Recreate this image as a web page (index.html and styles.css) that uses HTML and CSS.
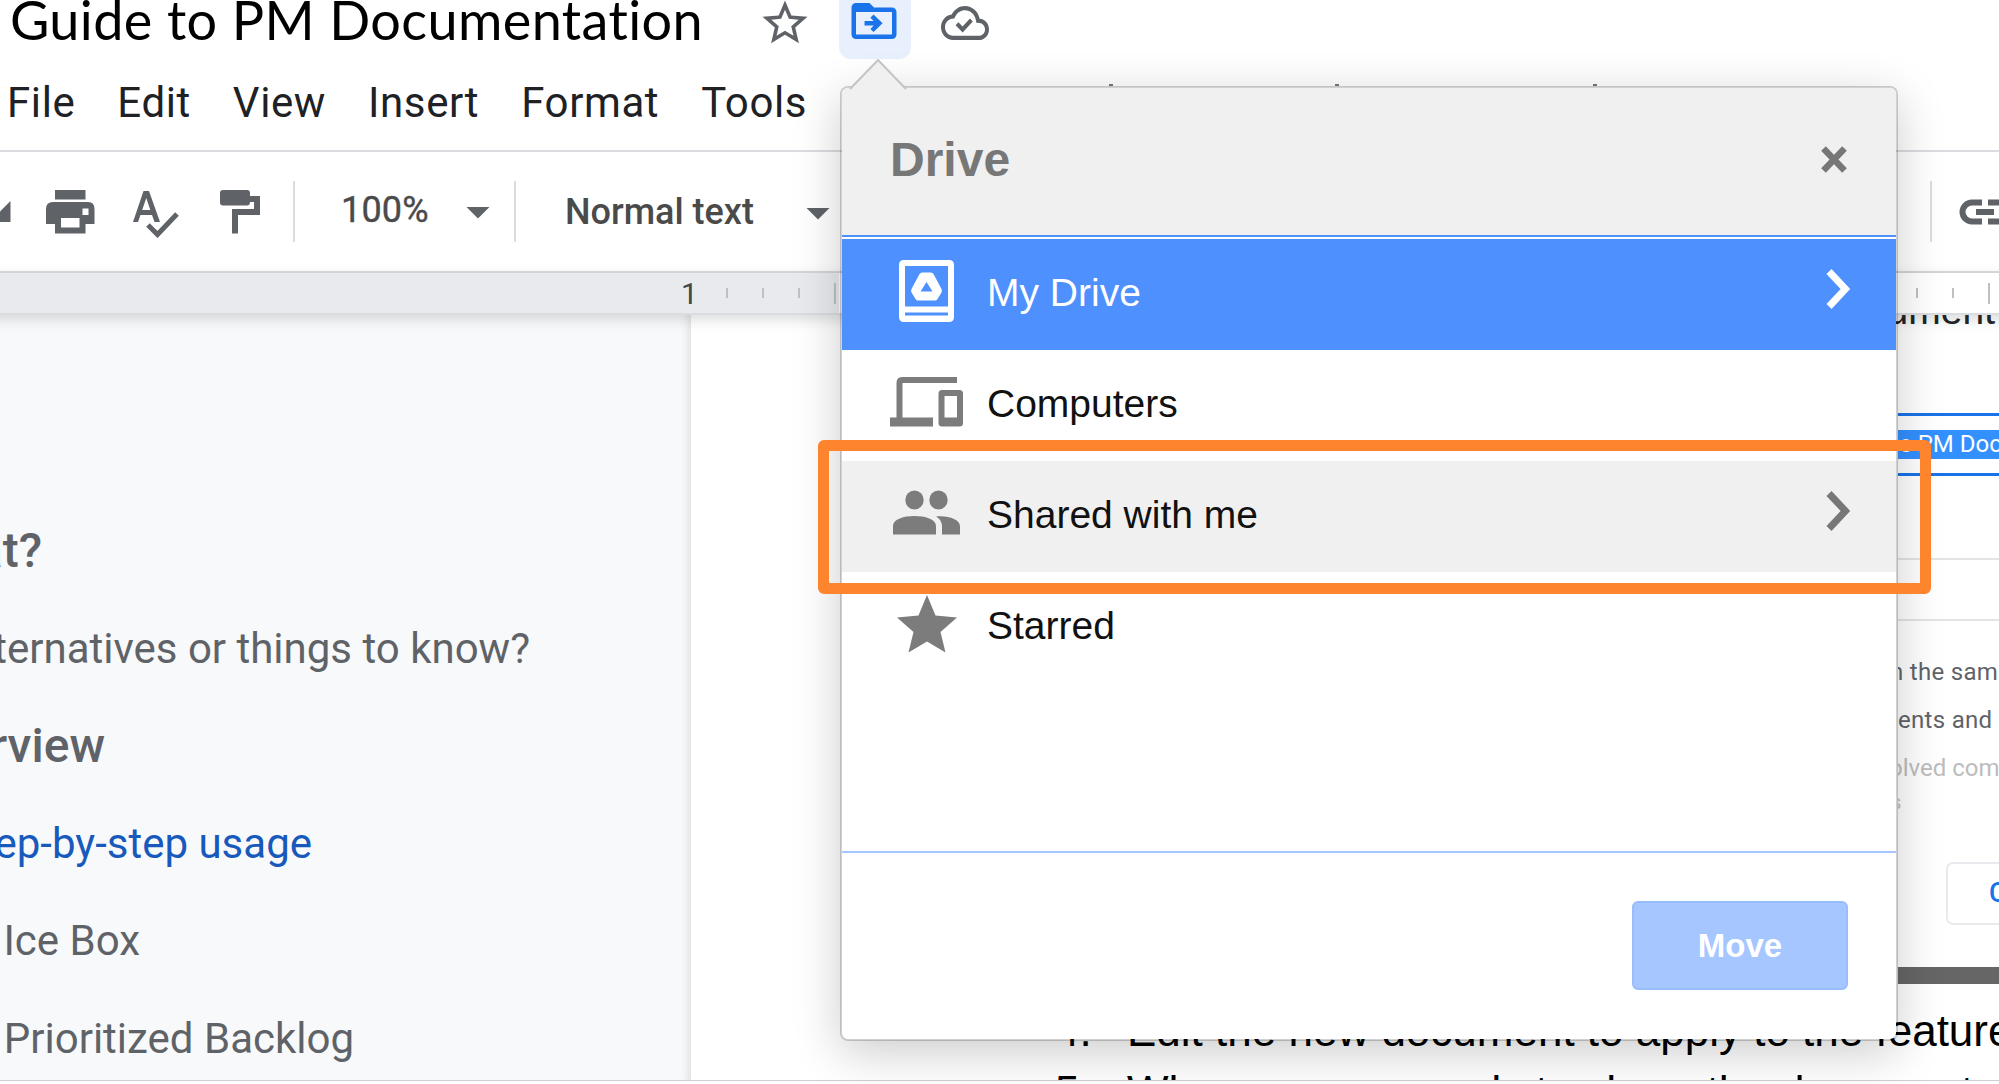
FILE: index.html
```html
<!DOCTYPE html>
<html lang="en">
<head>
<meta charset="utf-8">
<title>Guide to PM Documentation</title>
<link rel="stylesheet" href="styles.css">
</head>
<body>
<div class="app">
  <header class="title-row">
    <h1 class="doc-title">Guide to PM Documentation</h1>
    <svg class="icon-star" viewBox="0 0 24 24"><path d="M22 9.24l-7.19-.62L12 2 9.19 8.63 2 9.24l5.46 4.73L5.82 21 12 17.27 18.18 21l-1.63-7.03L22 9.24zM12 15.4l-3.76 2.27 1-4.28-3.32-2.88 4.38-.38L12 6.1l1.71 4.04 4.38.38-3.32 2.88 1 4.28L12 15.4z"/></svg>
    <span class="move-toggle">
      <svg viewBox="0 0 24 24"><path d="M20 6h-8l-2-2H4c-1.100 0-1.990.9-1.990 2L2 18c0 1.100.9 2 2 2h16c1.100 0 2-.9 2-2V8c0-1.100-.9-2-2-2zm0 12H4V8h16v10zm-8.200-1.100l4-3.900-4-3.900-1.400 1.400 1.450 1.500H7.800v2h4.050l-1.450 1.500z"/></svg>
    </span>
    <svg class="icon-cloud" viewBox="0 4 24 16" preserveAspectRatio="none"><path d="M19.350 10.040C18.670 6.590 15.640 4 12 4 9.110 4 6.600 5.640 5.350 8.040 2.340 8.360 0 10.910 0 14c0 3.310 2.690 6 6 6h13c2.760 0 5-2.240 5-5 0-2.640-2.050-4.780-4.650-4.960zM19 18H6c-2.210 0-4-1.790-4-4 0-2.050 1.530-3.760 3.560-3.970l1.070-.11.5-.95C8.080 7.140 9.940 6 12 6c2.620 0 4.880 1.860 5.390 4.430l.3 1.500 1.530.11c1.560.1 2.780 1.410 2.780 2.960 0 1.650-1.350 3-3 3z"/><path d="M8 12.300l2.800 2.800 4.400-4.500" class="tick"/></svg>
  </header>

  <nav class="menu-row">
    <span>File</span><span>Edit</span><span>View</span><span>Insert</span><span>Format</span><span>Tools</span>
  </nav>

  <div class="toolbar">
    <svg class="t-redo" width="11" height="22" viewBox="0 0 11 22"><path d="M10.500 0V21H0V10.500z"/></svg>
    <svg class="t-print" width="49" height="44" viewBox="0 0 49 44"><path fill-rule="evenodd" d="M9 0H39.500V9.500H9zM7 12H42Q48.500 12 48.500 19V34H39.500V43.500H9V34H0V19Q0 12 7 12zM15 28V37.500H33.500V28zM36.500 18.500V25H42.500V18.500z"/></svg>
    <svg class="t-spell" width="46" height="47" viewBox="0 0 46 47"><path fill-rule="evenodd" d="M10.500 0H16L27 31H21.500L19 24H7.500L5 31H0zM9.200 19H17.300L13.300 7z"/><path class="line" d="M15 34L24.500 43.500L44 23"/></svg>
    <svg class="t-paint" width="40" height="44" viewBox="0 0 40 44"><path d="M3 0H27Q30 0 30 3V6H40V25H18V43.500H12V19H34V12H30Q30 15.500 27 15.500H3Q0 15.500 0 12.500V3Q0 0 3 0z"/></svg>
    <i class="divider d1"></i>
    <span class="zoom">100%</span><i class="caret c1"></i>
    <i class="divider d2"></i>
    <span class="style-name">Normal text</span><i class="caret c2"></i>
    <i class="divider d3"></i>
    <svg class="t-link" width="60" height="30" viewBox="0 0 60 30"><path class="line" d="M25 5.500H15A9.500 9.500 0 0 0 15 24.500H25M31 5.500H41A9.500 9.500 0 0 1 41 24.500H31"/><path class="line" d="M19 15H37"/></svg>
  </div>

  <div class="ruler">
    <div class="ruler-margin"><b>1</b></div>
    <div class="ticks"><i></i><i></i><i></i><i class="big"></i></div>
    <div class="ticks far"><i></i><i></i><i class="big"></i></div>
  </div>

  <main class="workspace">
    <aside class="outline">
      <p class="o1"><strong>What?</strong></p>
      <p class="o2">Alternatives or things to know?</p>
      <p class="o3"><strong>Overview</strong></p>
      <p class="o4">Step-by-step usage</p>
      <p class="o5">Ice Box</p>
      <p class="o6">Prioritized Backlog</p>
    </aside>
    <article class="page">
      <p class="doc-line">document</p>
      <section class="figure">
        <div class="name-field"><span>e PM Documentation</span></div>
        <div class="rule r1"></div>
        <div class="rule r2"></div>
        <p class="f1">n the same</p>
        <p class="f2">ents and</p>
        <p class="f3">olved comments</p>
        <p class="f4">s</p>
        <div class="cancel">Cancel</div>
        <div class="dark-bar"></div>
      </section>
      <ol class="steps" start="4">
        <li><span>4.</span>Edit the new document to apply to the feature</li>
        <li><span>5.</span>When you are ready to share the document</li>
      </ol>
    </article>
  </main>
</div>

<i class="tip t1"></i><i class="tip t2"></i><i class="tip t3"></i>
<section class="popover">
  <svg class="pointer" width="58" height="31" viewBox="0 0 58 31"><path d="M1 30L29 1L57 30" /></svg>
  <header class="pop-head"><h2>Drive</h2>
    <svg width="26" height="27" viewBox="0 0 26 27"><path d="M2.500 2.500L23.500 24.500M23.500 2.500L2.500 24.500"/></svg>
  </header>
  <div class="list">
    <div class="row selected">
      <svg class="ic" width="55" height="62" viewBox="0 0 55 62"><path fill-rule="evenodd" d="M5 0H50Q55 0 55 5V57Q55 62 50 62H5Q0 62 0 57V5Q0 0 5 0zM6 6V46.500H49V6zM6 52.500V55.500H49V52.500zM23 12.500H32Q33.500 12.500 34.500 14L42.500 29Q43.300 31 42.500 32.500L38.500 39Q37.500 40.500 36 40.500H19Q17.500 40.500 16.500 39L12.500 32.500Q11.700 31 12.500 29L20.500 14Q21.500 12.500 23 12.500zM27.500 22L21.500 31.500H33.500z"/></svg>
      <span>My Drive</span>
      <svg class="chev" width="24" height="40" viewBox="0 0 24 40"><path d="M3 2.500L19.500 20L3 37.500"/></svg>
    </div>
    <div class="row">
      <svg class="ic" width="73" height="50" viewBox="0 0 73 50"><path fill-rule="evenodd" d="M12 0H67V6H12.500V40.500H43V49.500H0V40.500H6.500V6Q6.500 0 12 0zM52 13H69.500Q73 13 73 16.500V46Q73 49.500 69.500 49.500H52Q48.500 49.500 48.500 46V16.500Q48.500 13 52 13zM54.500 19V40.500H67V19z"/></svg>
      <span>Computers</span>
    </div>
    <div class="row hover">
      <svg class="ic" width="67" height="45" viewBox="0 0 67 45"><ellipse cx="21.500" cy="10" rx="9.200" ry="9.500"/><ellipse cx="45.500" cy="10" rx="9.200" ry="9.500"/><path d="M0 44.500V36C0 29 11 26 21.500 26S43 29 43 36V44.500zM43 26.500C54 25 67 29 67 36V44.500H49V37C49 32 47 29 43 26.500z"/></svg>
      <span>Shared with me</span>
      <svg class="chev" width="24" height="40" viewBox="0 0 24 40"><path d="M3 2.500L19.500 20L3 37.500"/></svg>
    </div>
    <div class="row">
      <svg class="ic" width="60" height="58" viewBox="0 0 60 58"><path d="M30 0L38.500 20.500L60 22.500L43.500 37L48.500 57.500L30 46.500L11.500 57.500L16.500 37L0 22.500L21.500 20.500z"/></svg>
      <span>Starred</span>
    </div>
  </div>
  <footer class="pop-foot"><button class="move">Move</button></footer>
</section>
<div class="highlight"></div>
</body>
</html>
```
FILE: styles.css
```css
* { box-sizing: border-box; }
body { margin: 0; position: relative; width: 1999px; height: 1084px; overflow: hidden; background: #fff; font-family: Roboto, "Liberation Sans", sans-serif; }
h1, h2, p, ol { margin: 0; padding: 0; font-weight: 400; }
svg { display: block; flex: none; }
.app { width: 1999px; height: 1081px; overflow: hidden; border-bottom: 1px solid #cfcfcf; }

.title-row { display: flex; align-items: center; height: 38px; padding-left: 10px; }
.doc-title { width: 748px; flex: none; margin-top: 1px; font-family: Lato, Roboto, sans-serif; font-size: 54px; line-height: 60px; letter-spacing: .38px; white-space: nowrap; color: #000; }
.title-row svg { fill: #5f6368; }
.icon-star { width: 54px; height: 54px; margin-top: 7px; }
.move-toggle { display: flex; justify-content: center; align-items: center; flex: none; width: 72px; height: 80px; margin-left: 27px; background: #e8f0fe; border-radius: 12px; }
.title-row .move-toggle svg { width: 54px; height: 54px; fill: #1a73e8; margin: 4px 3px 0 0; }
.icon-cloud { width: 48px; height: 34px; margin: 8px 0 0 30px; }
.tick { fill: none; stroke: #5f6368; stroke-width: 2; }

.menu-row { display: flex; align-items: center; gap: 42px; height: 114px; padding: 17px 0 0 7px; border-bottom: 2px solid #dadce0; font-size: 42px; letter-spacing: .6px; color: #202124; }

.toolbar { display: flex; align-items: center; height: 121px; border-bottom: 2px solid #dadce0; color: #4a4a4a; }
.toolbar svg { fill: #5f6368; }
.toolbar .line { fill: none; stroke: #5f6368; stroke-width: 5; }
.toolbar .t-link .line { stroke-width: 6; }
.t-print { margin-left: 35px; }
.t-spell { margin: 5px 0 0 38px; }
.t-paint { margin-left: 41px; }
.divider { flex: none; width: 2px; height: 61px; background: #dadce0; }
.d1 { margin-left: 33px; }
.zoom { flex: none; width: 125px; margin: -4px 0 0 46px; font-size: 36px; line-height: 44px; letter-spacing: .2px; -webkit-text-stroke: .4px #4a4a4a; }
.caret { flex: none; width: 24px; height: 12px; background: #5f6368; clip-path: polygon(0 0, 100% 0, 50% 100%); margin-top: 2px; }
.d2 { margin-left: 24px; }
.style-name { flex: none; width: 241px; margin-left: 49px; font-size: 36px; font-weight: 500; white-space: nowrap; }
.c2 { margin-top: 4px; }
.d3 { margin-left: 1100px; }
.t-link { margin-left: 25px; }

.ruler { position: relative; z-index: 1; display: flex; height: 42px; margin: 0 -20px; padding: 0 20px; background: linear-gradient(90deg, #e8eaed 20px, #fff 20px); border-bottom: 2px solid #dadce0; box-shadow: 0 4px 14px rgba(60,64,67,.2); }
.ruler-margin { width: 839px; padding-left: 681px; margin-right: -839px; background: #e8eaed; flex: none; color: #444746; }
.ruler-margin b { font-weight: 400; font-size: 30px; line-height: 41px; }
.ticks { display: flex; align-items: center; gap: 34px; margin-left: 726px; position: relative; }
.ticks i { width: 2px; height: 10px; background: #bdc1c6; }
.ticks .big { height: 21px; }
.far { margin-left: 1080px; }

.workspace { display: flex; height: 766px; }
.outline { width: 691px; flex: none; background: #f8f9fb; box-shadow: inset -10px 0 10px -8px rgba(60,64,67,.16); overflow: hidden; color: #5f6368; font-size: 42px; padding-top: 187px; }
.outline p { display: flex; justify-content: flex-end; white-space: nowrap; height: 97.600px; line-height: 97.600px; }
.outline strong { font-weight: 500; font-size: 48px; }
.o1 { width: 42px; }
.o2 { width: 530px; }
.o3 { width: 105px; }
.o4 { width: 312px; color: #185abc; }
.o5 { width: 140px; }
.o6 { width: 354px; }

.page { flex: 1; min-width: 0; overflow: hidden; background: #fff; }
.doc-line { width: 1304px; text-align: right; font: 39px/48px "Liberation Sans", sans-serif; color: #202124; margin-top: -28px; }
.figure { margin-left: 1207px; height: 654px; padding-top: 78px; font-size: 24px; font-weight: 500; color: #5f6368; white-space: nowrap; overflow: hidden; }
.name-field { height: 63px; border: solid #1a73e8; border-width: 3px 0; padding: 14px 0; color: #fff; font-weight: 400; }
.name-field span { display: block; height: 29px; line-height: 28px; background: #3390ff; padding-left: 1px; }
.rule { height: 2px; background: #e3e4e6; }
.r1 { margin-top: 82px; }
.r2 { margin-top: 59px; }
.figure p { line-height: 48px; letter-spacing: .3px; }
.figure .f1 { margin: 27px 0 0 -8px; }
.figure .f3 { margin-left: -9px; font-weight: 400; color: #bdbdbd; letter-spacing: 0; }
.figure .f4 { margin: -14px 0 0 -7px; font-size: 20px; color: #bdbdbd; }
.cancel { width: 160px; height: 63px; margin: 36px 0 0 48px; border: 2px solid #e8eaed; border-radius: 7px; padding-left: 41px; line-height: 59px; font-size: 27px; color: #1a73e8; }
.dark-bar { height: 17px; margin-top: 42px; background: #666; }
.steps { list-style: none; font: 44px/50px "Liberation Sans", sans-serif; color: #000; padding-left: 436px; margin-top: 17px; }
.steps li { white-space: nowrap; height: 61px; }
.steps li span { display: inline-block; width: 72px; margin-left: -72px; }

.tip { position: absolute; top: 84px; width: 4px; height: 2px; background: #777; }
.t1 { left: 1109px; }
.t2 { left: 1335px; }
.t3 { left: 1593px; }

.popover { position: absolute; z-index: 2; left: 840px; top: 86px; width: 1058px; height: 955px; border: 2px solid rgba(0,0,0,.18); border-radius: 8px; background: #fff; background-clip: padding-box; box-shadow: 0 12px 48px rgba(0,0,0,.2); font-family: "Liberation Sans", sans-serif; }
.pointer { position: absolute; left: 7px; top: -29px; fill: #f0f0f0; stroke: #c4c4c4; stroke-width: 2; }
.pop-head { display: flex; justify-content: space-between; align-items: center; height: 147px; padding: 0 49px 0 48px; background: #f0f0f0; border-radius: 6px 6px 0 0; }
.pop-head h2 { font-size: 48px; font-weight: 700; color: #777; line-height: 56px; margin-top: -3px; }
.pop-head svg { stroke: #777; stroke-width: 6.500; margin-top: -5px; }
.list { height: 618px; border-top: 2px solid #4d90fe; border-bottom: 2px solid #a6c6ff; padding-top: 2px; }
.row { display: grid; grid-template-columns: 62px 1fr 24px; column-gap: 36px; align-items: center; justify-items: start; height: 111px; padding: 0 46px 3px 47px; font-size: 39px; color: #111; }
.row .ic { justify-self: center; fill: #7c7c7c; margin: -5px 0 0 13px; }
.row .chev { fill: none; stroke: #777; stroke-width: 7; margin-top: -8px; }
.selected { background: #4d90fe; color: #fff; }
.row.selected .ic { fill: #fff; }
.row.selected .chev { stroke: #fff; }
.hover { background: #f0f0f0; }
.pop-foot { display: flex; justify-content: flex-end; padding: 48px 48px 0; }
.move { width: 216px; height: 89px; padding: 0; border: 2px solid #98bdfc; border-radius: 6px; background: #a6c6ff; color: #fff; font: 700 33px "Liberation Sans", sans-serif; }
.highlight { position: absolute; z-index: 3; left: 818px; top: 440px; width: 1113px; height: 154px; border: 11px solid #ff842e; border-radius: 6px; }
```
